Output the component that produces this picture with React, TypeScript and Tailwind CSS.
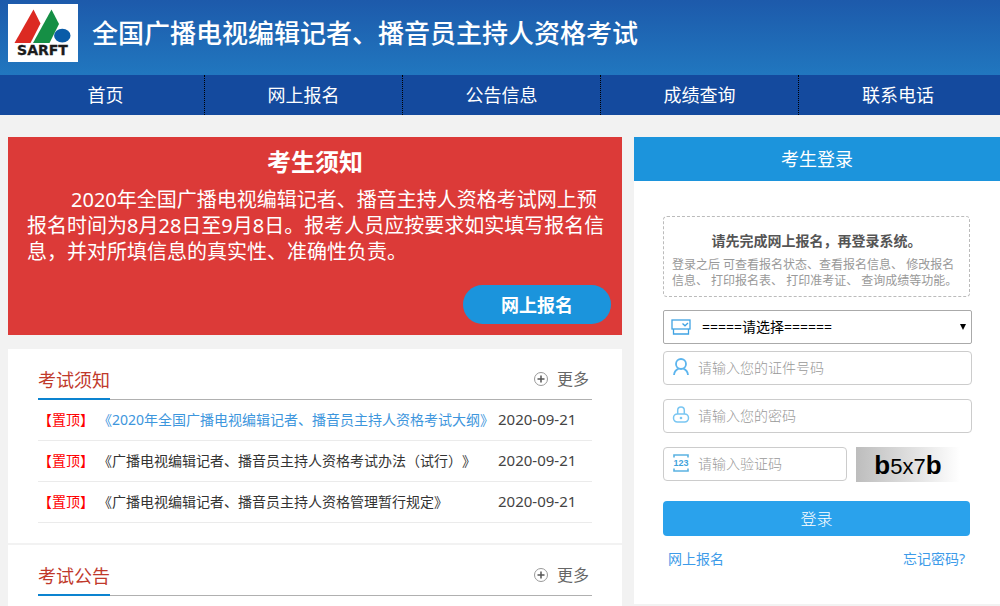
import React from "react";

const navItems = ["首页", "网上报名", "公告信息", "成绩查询", "联系电话"];

const notices = [
  { title: "《2020年全国广播电视编辑记者、播音员主持人资格考试大纲》", date: "2020-09-21", active: true },
  { title: "《广播电视编辑记者、播音员主持人资格考试办法（试行）》", date: "2020-09-21", active: false },
  { title: "《广播电视编辑记者、播音员主持人资格管理暂行规定》", date: "2020-09-21", active: false },
];

function Logo() {
  return (
    <svg viewBox="0 0 70 58" className="h-[58px] w-[70px] shrink-0 bg-white" role="img" aria-label="SARFT">
      <path d="M25.5 5.5 L32.5 19.5 L22.5 39 L6.5 39 Z" fill="#dc2a22" />
      <path d="M43.5 5.5 L51 20 L41.5 39 L25 39 Z" fill="#158f45" />
      <ellipse cx="54.3" cy="31.7" rx="8.2" ry="6.9" fill="#0a5ca8" />
      <text
        x="34.5"
        y="50.5"
        textAnchor="middle"
        fontFamily="DejaVu Sans"
        fontWeight="700"
        fontSize="14"
        fill="#1c1c1c"
        stroke="#1c1c1c"
        strokeWidth=".3"
      >
        SARFT
      </text>
    </svg>
  );
}

function SelectIcon() {
  return (
    <svg viewBox="0 0 20 16" className="h-4 w-5" fill="none" stroke="#3fa3e3" strokeWidth="1.3" aria-hidden="true">
      <rect x="1" y="1" width="18" height="9" />
      <path d="M2.5 10v5h15v-5M11.5 4.5l2.5 2.3 3-2.8" />
    </svg>
  );
}

function UserIcon() {
  return (
    <svg viewBox="0 0 16 18" className="h-[18px] w-4" fill="none" stroke="#5cb5ee" strokeWidth="1.8" aria-hidden="true">
      <circle cx="8" cy="6" r="5" />
      <path d="M1 17c.3-3.400 2-5.300 4.500-6.200M15 17c-.3-3.400-2-5.300-4.500-6.200" />
    </svg>
  );
}

function LockIcon() {
  return (
    <svg viewBox="0 0 18 18" className="size-[18px]" fill="none" stroke="#79c6f2" strokeWidth="1.5" aria-hidden="true">
      <path d="M5.700 8V4.300a3.300 3.300 0 0 1 6.600 0V8" />
      <rect x="1.500" y="8" width="15" height="8" rx="3.900" />
      <circle cx="9" cy="12" r=".6" fill="#5cb5ee" />
    </svg>
  );
}

function CodeIcon() {
  return (
    <svg viewBox="0 0 18 20" className="h-5 w-[18px]" fill="none" stroke="#5bb2e2" strokeWidth="1.6" aria-hidden="true">
      <path d="M2 4.500V2h14v2.500M2 15.500V18h14v-2.500" />
      <text
        x="9"
        y="13.2"
        textAnchor="middle"
        fontFamily="Liberation Sans"
        fontWeight="700"
        fontSize="9"
        fill="#3fa3dc"
        stroke="none"
      >
        123
      </text>
    </svg>
  );
}

function PlusIcon() {
  return (
    <svg viewBox="0 0 16 16" className="size-4" fill="none" aria-hidden="true">
      <circle cx="8" cy="8" r="6.500" stroke="#999" />
      <path d="M8 4.500v7M4.500 8h7" stroke="#555" strokeWidth="1.500" />
    </svg>
  );
}

function SectionHead({ title }: { title: string }) {
  return (
    <div className="flex h-[51px] items-stretch justify-between border-b border-[#b0b0b0]">
      <h2 className="-mb-px flex items-center border-b-2 border-[#0c83d0] pt-3 text-lg font-normal text-[#c0392b]">
        {title}
      </h2>
      <a href="#more" className="flex items-center gap-2 pr-[3px] pt-[10px] text-base text-[#666]">
        <PlusIcon />
        更多
      </a>
    </div>
  );
}

function Field({
  id,
  label,
  type,
  icon,
}: {
  id: string;
  label: string;
  type: string;
  icon: React.ReactNode;
}) {
  return (
    <div className="flex h-[34px] min-w-0 flex-1 items-center rounded border border-[#ccc] bg-white pb-[2px]">
      <label htmlFor={id} className="flex w-[34px] shrink-0 justify-center" aria-label={label}>
        {icon}
      </label>
      <input
        id={id}
        type={type}
        placeholder={label}
        className="h-full min-w-0 flex-1 bg-transparent text-sm font-light outline-none placeholder:text-[#999]"
      />
    </div>
  );
}

export default function App() {
  return (
    <div className="min-h-screen bg-[#f2f2f2] font-['Noto_Sans','Noto_Sans_CJK_SC',sans-serif] text-[#333] [text-spacing-trim:space-all]">
      <header className="flex h-[75px] items-start gap-[14px] bg-linear-to-b from-[#1d5aab] to-[#2177bf] pl-2 pt-1">
        <Logo />
        <h1 className="pt-[11px] text-[26px] font-medium leading-9 text-white">
          全国广播电视编辑记者、播音员主持人资格考试
        </h1>
      </header>
      <nav className="grid h-10 grid-cols-5 bg-[#144a9e] pl-[7px] pr-[3px]">
        {navItems.map((item) => (
          <a
            key={item}
            href="#nav"
            className="flex items-center justify-center border-r border-dotted border-black text-lg text-white last:border-r-0"
          >
            {item}
          </a>
        ))}
      </nav>

      <main className="grid grid-cols-[614fr_366fr] items-start gap-3 pl-2 pt-[22px]">
        <div className="flex min-w-0 flex-col">
          <section className="flex h-[198px] flex-col bg-[#dc3a38] text-white">
            <h2 className="pt-[9px] text-center text-2xl font-bold leading-8">考生须知</h2>
            <p className="mt-[9px] pl-[19px] pr-[11px] indent-11 text-xl leading-[26px]">
              2020年全国广播电视编辑记者、播音主持人资格考试网上预报名时间为8月28日至9月8日。报考人员应按要求如实填写报名信息，并对所填信息的真实性、准确性负责。
            </p>
            <button
              type="button"
              className="mb-[11px] mr-[11px] mt-auto h-[39px] w-[148px] self-end rounded-full bg-[#1b94dc] text-lg font-bold"
            >
              网上报名
            </button>
          </section>

          <section className="mt-[14px] h-[194px] bg-white px-[30px]">
            <SectionHead title="考试须知" />
            <ul>
              {notices.map((n) => (
                <li key={n.title} className="flex h-[41px] items-center border-b border-[#ebebeb] text-sm">
                  <span className="w-[60px] shrink-0 text-[#f00]">【置顶】</span>
                  <a
                    href="#notice"
                    className={
                      n.active
                        ? "flex-1 whitespace-nowrap text-[#3d96dd]"
                        : "flex-1 whitespace-nowrap text-[#333]"
                    }
                  >
                    {n.title}
                  </a>
                  <time className="w-[94px] shrink-0 text-[15px] text-[#444]">{n.date}</time>
                </li>
              ))}
            </ul>
          </section>

          <section className="mt-[2px] bg-white px-[30px] pb-[10px]">
            <SectionHead title="考试公告" />
          </section>
        </div>

        <section className="min-w-0 bg-white">
          <h2 className="flex h-11 items-center justify-center bg-[#1c94dc] text-lg text-white">考生登录</h2>
          <form className="pb-[34px] pl-[29px] pr-7 pt-[35px]" onSubmit={(e) => e.preventDefault()}>
            <div className="mr-[2px] rounded border border-dashed border-[#bbb] px-2 pb-[7px] pt-[14px]">
              <p className="text-center text-sm font-bold leading-5 text-[#555]">请先完成网上报名，再登录系统。</p>
              <p className="mt-[6px] text-xs leading-4 text-[#999]">
                登录之后 可查看报名状态、查看报名信息、 修改报名信息、 打印报名表、 打印准考证、 查询成绩等功能。
              </p>
            </div>

            <div className="mt-[13px] grid h-[34px] grid-cols-1 items-center rounded-xs border border-[#aaa]">
              <label htmlFor="exam" className="col-start-1 row-start-1 pl-[7px]" aria-label="请选择">
                <SelectIcon />
              </label>
              <select
                id="exam"
                className="col-start-1 row-start-1 h-8 w-full appearance-none bg-transparent pl-[38px] text-sm text-black outline-none"
              >
                <option>=====请选择======</option>
              </select>
              <svg
                viewBox="0 0 6 6"
                className="pointer-events-none col-start-1 row-start-1 mr-[5px] size-[6px] justify-self-end"
                aria-hidden="true"
              >
                <path d="M0 0h6L3 6z" fill="#000" />
              </svg>
            </div>

            <div className="mt-[7px] flex">
              <Field id="idno" label="请输入您的证件号码" type="text" icon={<UserIcon />} />
            </div>
            <div className="mt-[14px] flex">
              <Field id="pwd" label="请输入您的密码" type="password" icon={<LockIcon />} />
            </div>
            <div className="mt-[14px] flex gap-[9px] pr-3">
              <Field id="code" label="请输入验证码" type="text" icon={<CodeIcon />} />
              <button
                type="button"
                className="flex h-[35px] w-[104px] items-baseline justify-center bg-linear-to-r from-[#bdbdbd] to-white font-['Liberation_Sans',sans-serif] text-[22px] leading-9 text-black"
              >
                <b className="text-[26px]">b</b>5x7<b className="text-[26px]">b</b>
              </button>
            </div>

            <div className="mr-[2px] mt-[19px]">
              <button type="submit" className="h-[35px] w-full rounded bg-[#2aa2ec] text-base font-light text-white">
                登录
              </button>
            </div>
            <div className="mr-[2px] mt-[13px] flex justify-between px-[5px] pb-px text-sm leading-5 text-[#3d9be9]">
              <a href="#signup">网上报名</a>
              <a href="#forgot">忘记密码?</a>
            </div>
          </form>
        </section>
      </main>
    </div>
  );
}
